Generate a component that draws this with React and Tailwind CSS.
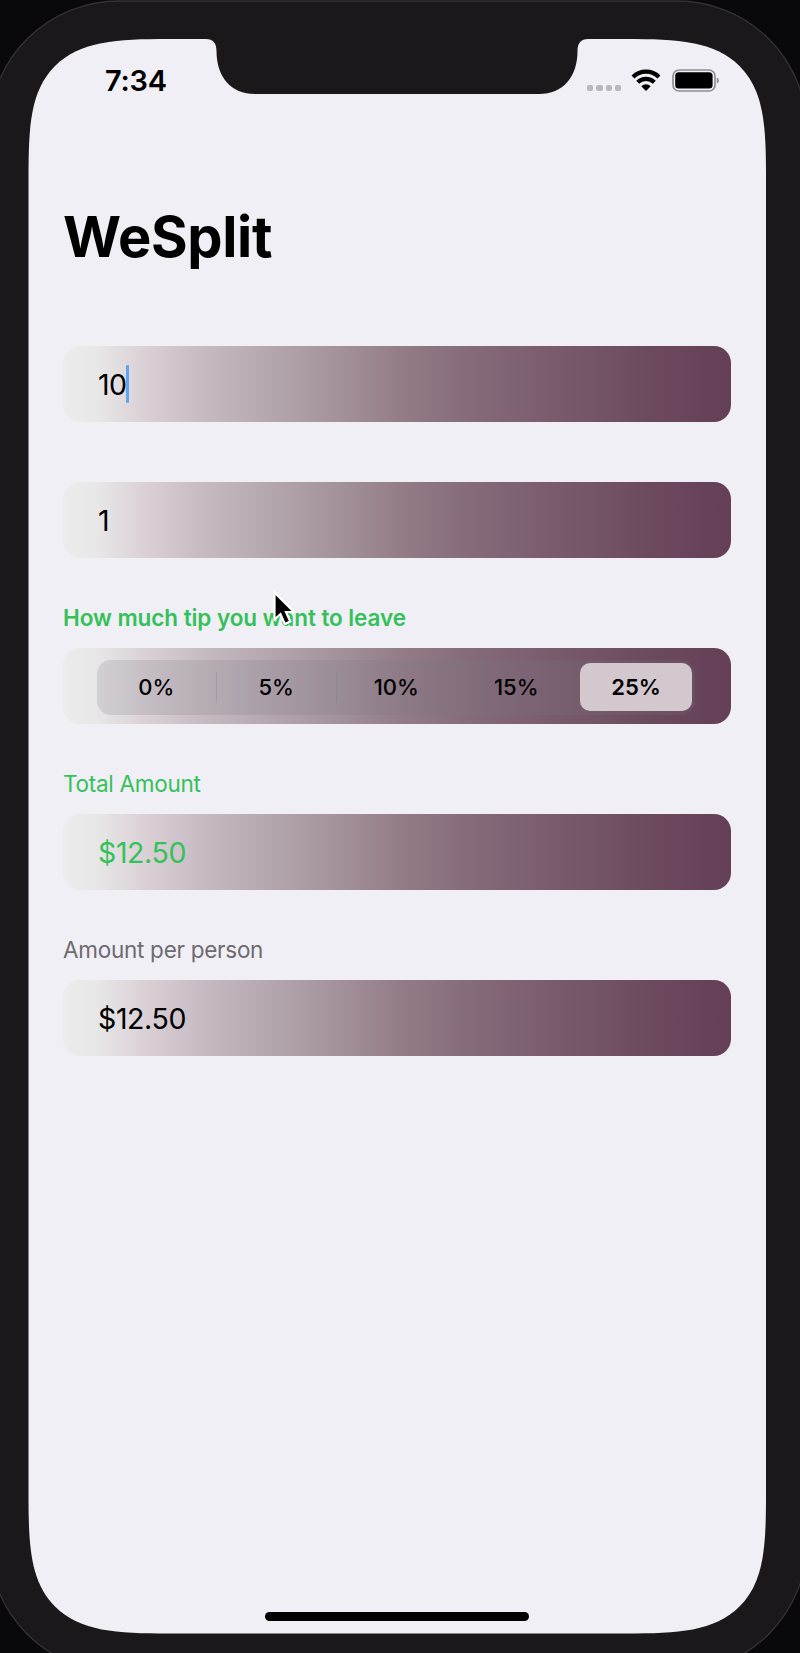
import React from "react";

const tips = ["0%", "5%", "10%", "15%", "25%"];

function Row({ className = "", children }) {
  return (
    <div
      className={`flex h-[76px] w-[668px] items-center rounded-[17px] bg-[linear-gradient(90deg,#ececec_0%,#e8e7e7_5%,#d8ced4_13%,#c8bdc4_20%,#b4a6af_31%,#a3929c_41%,#927b87_51%,#836878_63%,#78596b_75%,#6c4a5e_88%,#643f56_100%)] ${className}`}
    >
      {children}
    </div>
  );
}

function Battery() {
  return (
    <svg className="block h-[23px] w-[48px]" viewBox="0 0 48 23">
      <rect x="1" y="1" width="42" height="21" rx="6" fill="none" stroke="#8f8d92" strokeWidth="1.7" />
      <rect x="3.2" y="3.2" width="37.4" height="16.4" rx="3.6" fill="#000" />
      <path d="M44.8 8.5C47.6 9.3 47.6 13.7 44.8 14.5Z" fill="#8f8d92" />
    </svg>
  );
}

function Wifi() {
  return (
    <svg className="block h-[22px] w-[30px]" viewBox="0 0 30 22">
      <g fill="none" stroke="#000" strokeWidth="4.2">
        <path d="M2 7.9A18.6 18.6 0 0 1 28 7.9" />
        <path d="M6.7 13.3A12 12 0 0 1 23.3 13.3" />
      </g>
      <path d="M15 22L10.3 17.2A6.8 6.8 0 0 1 19.7 17.2Z" fill="#000" />
    </svg>
  );
}

export default function App() {
  return (
    <div className="relative h-[1653px] w-[800px] overflow-hidden bg-[#09080b] font-['Inter','Liberation_Sans',sans-serif] text-black">
      <svg className="absolute inset-0 h-[1653px] w-[800px]" viewBox="0 0 800 1653">
        <rect x="-11" y="1" width="818" height="1671" rx="130" fill="#1a181b" stroke="#343236" strokeWidth="1.3" />
      </svg>
      <div className="relative pt-[39px] pl-[28px]">
        <main className="relative flex h-[1595px] w-[738px] flex-col bg-[#f0eff5] [clip-path:path('M140.5_0C88.5_0_52_2_27_27C2_52_.5_88_.5_140V1454.5C.5_1506.5_2_1542.5_27_1567.5C52_1592.5_88.5_1594.5_140.5_1594.5H598C650_1594.5_686.5_1592.5_711.5_1567.5C736.5_1542.5_738_1506.5_738_1454.5V140C738_88_736.5_52_711.5_27C686.5_2_650_0_598_0Z')]">
          <svg className="absolute top-0 left-[178px] h-[56px] w-[382px]" viewBox="0 0 382 56">
            <path d="M0 0C7 0 10.5 4 10.5 12C10.5 38 25 55 49 55H333C357 55 371.5 38 371.5 12C371.5 4 375 0 382 0Z" fill="#1a181b" />
          </svg>
          <header className="flex h-[150px] justify-between pt-[24px] pr-[46px] pl-[77px]">
            <span className="text-[29px] leading-[35px] font-semibold tracking-[-0.2px]">7:34</span>
            <div className="flex pt-[6px]">
              <div className="flex gap-[3px] pt-[16px]">
                {[0, 1, 2, 3].map((i) => (
                  <i key={i} className="block size-[6.2px] rounded-[2px] bg-[#b9b6bc]" />
                ))}
              </div>
              <div className="pl-[10px]"><Wifi /></div>
              <div className="pl-[11px]"><Battery /></div>
            </div>
          </header>
          <div className="flex flex-col pl-[35px]">
            <h1 className="h-[157px] pt-[14px] text-[56px] leading-[68px] font-bold tracking-[-0.35px]">WeSplit</h1>
            <Row className="pl-[35px]">
              <span className="pt-[2px] text-[28.5px] tracking-[-0.6px]">10</span>
              <span className="h-[38px] w-[3px] rounded-[1px] bg-[#5ea5f2]" />
            </Row>
            <Row className="mt-[60px] pl-[35px]">
              <span className="pt-[2px] text-[28.5px]">1</span>
            </Row>
            <h2 className="mt-[46px] h-[44px] text-[22.5px] leading-[28px] font-semibold tracking-[-0.07px] text-[#35c159]">How much tip you want to leave</h2>
            <Row className="pl-[34px]">
              <div className="mt-[2px] flex h-[55px] w-[598px] items-center rounded-[14px] bg-[#767680]/20">
                {tips.map((t, i) => (
                  <React.Fragment key={t}>
                    {i > 0 && <i className={i < 3 ? "h-[31px] w-[1.5px] bg-[#776b78]/25" : "w-[1.5px]"} />}
                    <span
                      className={
                        i === 4
                          ? "ml-[3px] mr-[3px] flex h-[48px] w-[112px] items-center justify-center rounded-[10px] bg-[#d2c8ce] pt-[1px] text-[22px] font-semibold"
                          : "flex h-full flex-1 items-center justify-center pt-[1px] text-[22px] font-medium"
                      }
                    >
                      {t}
                    </span>
                  </React.Fragment>
                ))}
              </div>
            </Row>
            <h2 className="mt-[46px] h-[44px] text-[22.5px] leading-[28px] tracking-[-0.27px] text-[#35c159]">Total Amount</h2>
            <Row className="pl-[35px]">
              <span className="pt-[2px] text-[28.5px] tracking-[-0.4px] text-[#35c159]">$12.50</span>
            </Row>
            <h2 className="mt-[46px] h-[44px] text-[22.5px] leading-[28px] tracking-[-0.27px] text-[#6d6a70]">Amount per person</h2>
            <Row className="pl-[35px]">
              <span className="pt-[2px] text-[28.5px] tracking-[-0.4px]">$12.50</span>
            </Row>
          </div>
          <div className="mt-auto mb-[13px] ml-[237px] h-[9px] w-[264px] rounded-full bg-black" />
        </main>
      </div>
      <svg className="absolute top-[588px] left-[270px] h-[42px] w-[30px]" viewBox="0 0 30 42">
        <path d="M4.5 4.5V31.5L10.5 26L14.8 36L20.3 33.5L16 24H24Z" fill="#000" stroke="#fff" strokeWidth="2.2" />
      </svg>
    </div>
  );
}
